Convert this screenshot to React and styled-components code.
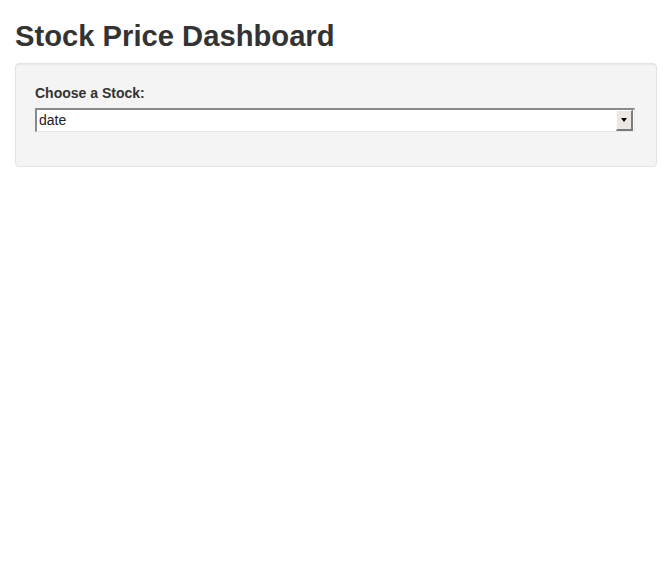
import styled, { createGlobalStyle } from 'styled-components';

const GlobalStyle = createGlobalStyle`
  body {
    margin: 0;
    background: #fff;
    font-family: "Liberation Sans", Arial, sans-serif;
    font-size: 14px;
    line-height: 1.42857;
    color: #333;
  }
`;

const Page = styled.div`
  padding: 0 15px;
`;

const Title = styled.h2`
  margin: 20px 0 10px;
  font-size: 29.2px;
  line-height: 33px;
  font-weight: bold;
  color: #333;
`;

const Well = styled.div`
  padding: 19px;
  margin-bottom: 20px;
  background-color: #f4f4f4;
  border: 1px solid #e3e3e3;
  border-radius: 4px;
  box-shadow: inset 0 1px 1px rgba(0, 0, 0, 0.05);
`;

const FormGroup = styled.div`
  margin-bottom: 15px;
`;

const Label = styled.label`
  display: block;
  margin-top: 1px;
  margin-bottom: 4px;
  font-weight: bold;
`;

const SelectBox = styled.div`
  display: flex;
  align-items: stretch;
  height: 24px;
  box-sizing: border-box;
  background: #fff;
  border-top: 2px solid #8a8a8a;
  border-left: 2px solid #8a8a8a;
  border-right: 1px solid #e6e6e6;
  border-bottom: 1px solid #e6e6e6;
  margin-right: 2px;
`;

const Select = styled.select`
  flex: 1;
  appearance: none;
  border: none;
  outline: none;
  background: transparent;
  padding: 0 2px;
  font-family: "Liberation Sans", Arial, sans-serif;
  font-size: 14px;
  color: #222;
`;

const DropButton = styled.span`
  width: 14px;
  display: flex;
  align-items: center;
  justify-content: center;
  background: #ece9e2;
  border-top: 1px solid #fff;
  border-left: 1px solid #fff;
  border-right: 2px solid #7a7a7a;
  border-bottom: 2px solid #7a7a7a;
  margin-right: 1px;
`;

const Arrow = styled.span`
  width: 0;
  height: 0;
  border-left: 3px solid transparent;
  border-right: 3px solid transparent;
  border-top: 4px solid #000;
`;

export default function App() {
  return (
    <>
      <GlobalStyle />
      <Page>
        <Title>Stock Price Dashboard</Title>
        <Well>
          <FormGroup>
            <Label htmlFor="stock">Choose a Stock:</Label>
            <SelectBox>
              <Select id="stock" defaultValue="date">
                <option value="date">date</option>
              </Select>
              <DropButton>
                <Arrow />
              </DropButton>
            </SelectBox>
          </FormGroup>
        </Well>
      </Page>
    </>
  );
}
